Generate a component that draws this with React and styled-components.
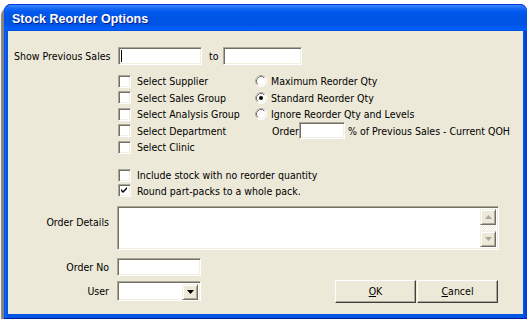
import React from 'react';
import styled, { createGlobalStyle } from 'styled-components';

const Global = createGlobalStyle`
  html, body { margin: 0; padding: 0; background: #ffffff; }
  body { font-family: "DejaVu Sans Condensed", "Liberation Sans", Arial, sans-serif; font-size: 10.5px; color: #000; }
  * { box-sizing: border-box; }
`;

const Window = styled.div`
  margin: 4px 0 0 4px;
  width: 523px;
  height: 315px;
  display: flex;
  flex-direction: column;
  border-radius: 7px 7px 0 0;
  background: #0055e5;
  box-shadow: -3px 4px 1px rgba(100, 100, 100, 0.8);
`;

const TitleBar = styled.div`
  height: 27px;
  flex: none;
  display: flex;
  align-items: center;
  padding: 2px 0 0 8px;
  border-radius: 7px 7px 0 0;
  border-top: 1px solid #0831d9;
  background: linear-gradient(
    to bottom,
    #3d8dff 0px,
    #1a6bf5 3px,
    #0058ee 7px,
    #0054e3 14px,
    #0053e6 20px,
    #0061ff 24px,
    #0046d4 27px
  );
`;

const Title = styled.span`
  font-family: "Liberation Sans", Arial, sans-serif;
  font-weight: bold;
  font-size: 12.5px;
  color: #ffffff;
  text-shadow: 1px 1px 0 #0a1e8c;
`;

const Frame = styled.div`
  flex: 1;
  display: flex;
  padding: 0 4px 4px 4px;
  background: linear-gradient(to right, #0831d9 0px, #166aee 1px, #0055e5 3px, #0055e5 calc(100% - 3px), #0831d9 100%);
  border-bottom: 1px solid #001ea0;
`;

const Client = styled.div`
  flex: 1;
  background: #ece9d8;
  display: flex;
  flex-direction: column;
  padding-top: 16px;
`;

const sunken = `
  background: #ffffff;
  border-style: solid;
  border-width: 1px;
  border-color: #aca899 #ffffff #ffffff #aca899;
  box-shadow: inset 1px 1px 0 #716f64, inset -1px -1px 0 #f1efe2;
`;

const raised = `
  background: #ece9d8;
  border-style: solid;
  border-width: 1px;
  border-color: #f1efe2 #716f64 #716f64 #f1efe2;
  box-shadow: inset 1px 1px 0 #ffffff, inset -1px -1px 0 #aca899;
`;

const SalesRow = styled.div`
  display: flex;
  align-items: center;
  padding-left: 6px;
  height: 18px;
`;

const LeadLabel = styled.span`
  width: 104px;
  white-space: nowrap;
`;

const Field = styled.div`
  ${sunken}
  width: ${p => p.$w}px;
  height: ${p => p.$h || 18}px;
  flex: none;
  display: flex;
  align-items: flex-start;
`;

const Caret = styled.span`
  display: block;
  width: 1px;
  height: 12px;
  margin: 2px 0 0 2px;
  background: #000;
`;

const ToLabel = styled.span`
  width: 21px;
  padding-left: 7px;
`;

const Options = styled.div`
  display: flex;
  margin: 8px 0 0 110px;
`;

const Column = styled.div`
  display: flex;
  flex-direction: column;
  width: ${p => p.$w ? `${p.$w}px` : 'auto'};
`;

const OptionRow = styled.label`
  display: flex;
  align-items: center;
  height: ${p => p.$h || 16.5}px;
  gap: ${p => p.$gap || 6}px;
  white-space: nowrap;
`;

const Box = styled.span`
  ${sunken}
  width: 13px;
  height: 13px;
  flex: none;
  display: flex;
  align-items: center;
  justify-content: center;
`;

const OrderRow = styled.div`
  display: flex;
  align-items: center;
  height: 16.5px;
  padding-left: 17px;
  white-space: nowrap;
`;

const OrderWord = styled.span`
  width: 27px;
  flex: none;
`;

const PctText = styled.span`
  margin-left: 3px;
`;

const ExtraChecks = styled.div`
  display: flex;
  flex-direction: column;
  margin: 12px 0 0 110px;
`;

const DetailsRow = styled.div`
  display: flex;
  margin-top: 7px;
`;

const SideLabel = styled.span`
  width: 109px;
  text-align: right;
  padding-right: 8px;
  padding-top: ${p => p.$top || 0}px;
  white-space: nowrap;
`;

const Memo = styled.div`
  ${sunken}
  width: 382px;
  height: 44px;
  display: flex;
  justify-content: flex-end;
  padding: 2px;
`;

const ScrollBar = styled.div`
  width: 16px;
  display: flex;
  flex-direction: column;
`;

const ScrollBtn = styled.div`
  ${raised}
  width: 16px;
  height: 16px;
  flex: none;
  display: flex;
  align-items: center;
  justify-content: center;
`;

const Track = styled.div`
  flex: 1;
  background: repeating-conic-gradient(#ffffff 0 25%, #ece9d8 0 50%) 0 0 / 2px 2px;
`;

const Bottom = styled.div`
  display: flex;
  align-items: flex-start;
  margin-top: 8px;
`;

const FormGrid = styled.div`
  display: grid;
  grid-template-columns: 109px 84px;
  row-gap: 5px;
  align-items: center;
`;

const Combo = styled.div`
  ${sunken}
  width: 84px;
  height: 20px;
  display: flex;
  justify-content: flex-end;
  padding: 2px;
`;

const DropBtn = styled.div`
  ${raised}
  width: 16px;
  height: 16px;
  display: flex;
  align-items: center;
  justify-content: center;
`;

const Buttons = styled.div`
  display: flex;
  gap: 1px;
  margin: 22px 25px 0 auto;
`;

const Button = styled.button`
  ${raised}
  width: 81px;
  height: 23px;
  font-family: inherit;
  font-size: 10.5px;
  color: #000;
  padding: 0;
  display: flex;
  align-items: center;
  justify-content: center;
  border-color: #ffffff #404040 #404040 #ffffff;
  box-shadow: inset -1px -1px 0 #aca899;
`;

const Key = styled.span`
  text-decoration: underline;
`;

const Check = () => (
  <svg width="7" height="7" viewBox="0 0 7 7">
    <path d="M0 2 L2 4 L6 0 L6 2 L2 6 L0 4 Z" fill="#000" />
  </svg>
);

const CheckBox = ({ checked }) => <Box>{checked && <Check />}</Box>;

const Radio = ({ checked }) => (
  <svg width="12" height="12" viewBox="0 0 12 12" style={{ flex: 'none' }}>
    <circle cx="6" cy="6" r="5.5" fill="#fff" stroke="#ffffff" />
    <path d="M2.11 9.89 A5.5 5.5 0 0 1 9.89 2.11" fill="none" stroke="#aca899" />
    <circle cx="6" cy="6" r="4.5" fill="#fff" stroke="#f1efe2" />
    <path d="M2.82 9.18 A4.5 4.5 0 0 1 9.18 2.82" fill="none" stroke="#716f64" />
    {checked && <circle cx="6" cy="6" r="2" fill="#000" />}
  </svg>
);

const Arrow = ({ dir = 'down', color = '#000' }) => (
  <svg width="7" height="4" viewBox="0 0 7 4">
    {dir === 'down'
      ? <path d="M0 0 H7 L3.5 4 Z" fill={color} />
      : <path d="M0 4 H7 L3.5 0 Z" fill={color} />}
  </svg>
);

const checks = ['Select Supplier', 'Select Sales Group', 'Select Analysis Group', 'Select Department', 'Select Clinic'];
const radios = [
  { label: 'Maximum Reorder Qty', checked: false },
  { label: 'Standard Reorder Qty', checked: true },
  { label: 'Ignore Reorder Qty and Levels', checked: false },
];

export default function App() {
  return (
    <>
      <Global />
      <Window>
        <TitleBar>
          <Title>Stock Reorder Options</Title>
        </TitleBar>
        <Frame>
          <Client>
            <SalesRow>
              <LeadLabel>Show Previous Sales</LeadLabel>
              <Field $w={84}><Caret /></Field>
              <ToLabel>to</ToLabel>
              <Field $w={79} />
            </SalesRow>

            <Options>
              <Column $w={137}>
                {checks.map(c => (
                  <OptionRow key={c}>
                    <CheckBox />
                    <span>{c}</span>
                  </OptionRow>
                ))}
              </Column>
              <Column>
                {radios.map(r => (
                  <OptionRow key={r.label} $gap={4}>
                    <Radio checked={r.checked} />
                    <span>{r.label}</span>
                  </OptionRow>
                ))}
                <OrderRow>
                  <OrderWord>Order</OrderWord>
                  <Field $w={46} $h={17} />
                  <PctText>% of Previous Sales - Current QOH</PctText>
                </OrderRow>
              </Column>
            </Options>

            <ExtraChecks>
              <OptionRow $h={15.5}>
                <CheckBox />
                <span>Include stock with no reorder quantity</span>
              </OptionRow>
              <OptionRow $h={15.5}>
                <CheckBox checked />
                <span>Round part-packs to a whole pack.</span>
              </OptionRow>
            </ExtraChecks>

            <DetailsRow>
              <SideLabel $top={10}>Order Details</SideLabel>
              <Memo>
                <ScrollBar>
                  <ScrollBtn><Arrow dir="up" color="#aca899" /></ScrollBtn>
                  <Track />
                  <ScrollBtn><Arrow dir="down" color="#aca899" /></ScrollBtn>
                </ScrollBar>
              </Memo>
            </DetailsRow>

            <Bottom>
              <FormGrid>
                <SideLabel>Order No</SideLabel>
                <Field $w={84} />
                <SideLabel>User</SideLabel>
                <Combo>
                  <DropBtn><Arrow /></DropBtn>
                </Combo>
              </FormGrid>
              <Buttons>
                <Button><Key>O</Key>K</Button>
                <Button><Key>C</Key>ancel</Button>
              </Buttons>
            </Bottom>
          </Client>
        </Frame>
      </Window>
    </>
  );
}
